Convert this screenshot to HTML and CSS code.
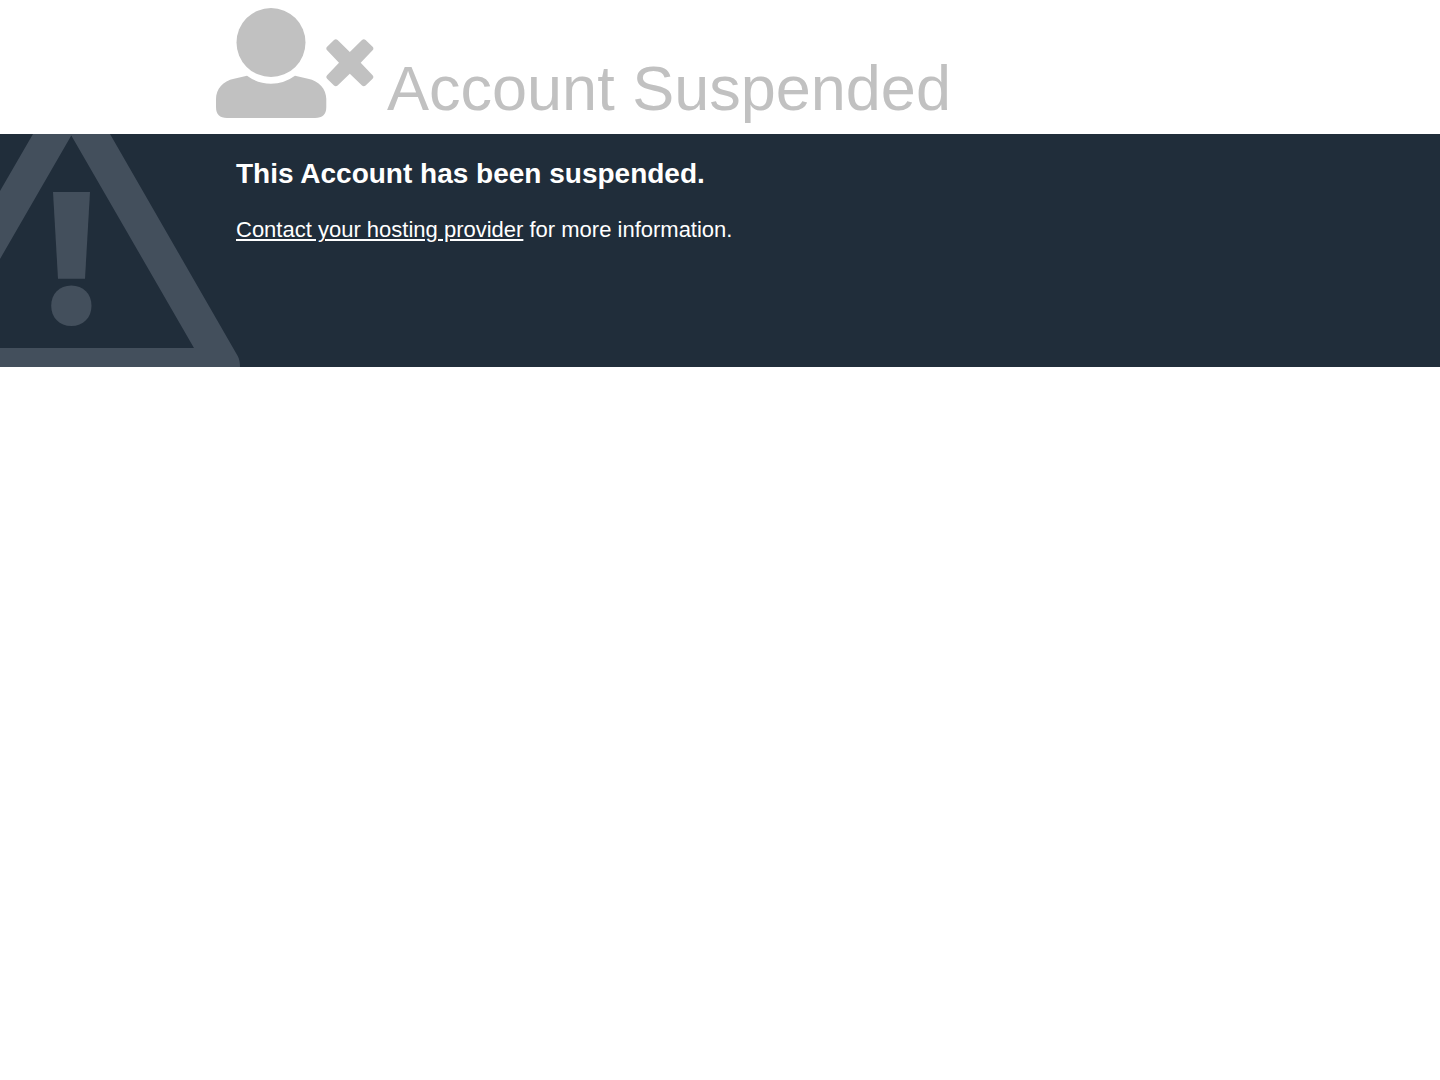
FILE: index.html
```html
<!DOCTYPE html>
<html lang="en">
<head>
    <meta charset="UTF-8">
    <meta name="viewport" content="width=device-width, initial-scale=1.0">
    <title>Account Suspended</title>
    <link rel="stylesheet" href="styles.css">
</head>
<body>
    <header class="container status">
        <svg class="status-icon" viewBox="0 0 158 110" aria-hidden="true">
            <circle cx="55" cy="34.5" r="34.5"/>
            <path d="M31 67.7 Q42 75.7 55 75.7 T79 67.7 L92 70.7 C103 73 110.3 81 110.3 91 V99 Q110.3 110 99 110 H11 Q0 110 0 99 V91 C0 81 7 73 18 70.7 Z"/>
            <path d="M118 32 Q119.8 30.6 121.6 32 L133.8 44 L146 32 Q147.8 30.6 149.6 32 L156.6 38.8 Q158.2 40.5 156.6 42.3 L144.7 54.8 L156.6 67.3 Q158.2 69.1 156.6 70.8 L149.6 77.6 Q147.8 79 146 77.6 L133.8 65.7 L121.6 77.6 Q119.8 79 118 77.6 L111.1 70.8 Q109.5 69.1 111.1 67.3 L123 54.8 L111.1 42.3 Q109.5 40.5 111.1 38.8 Z"/>
        </svg>
        <h1 class="status-reason">Account Suspended</h1>
    </header>

    <main class="content">
        <svg class="warning" viewBox="0 0 240 233" aria-hidden="true">
            <path d="M33 0 H110 L237.7 222 Q240 226 240 233 H0 V214 H194 L71.3 1.5 L0 125 V57 Z"/>
            <path d="M53 58 H90 L85 144.7 H58 Z"/>
            <path d="M71.3 151.5 C83.2 151.5 91.5 159.8 91.5 171.7 S83.2 192 71.3 192 S51.2 183.6 51.2 171.7 S59.4 151.5 71.3 151.5 Z"/>
        </svg>
        <div class="container info">
            <h2 class="info-heading">This Account has been suspended.</h2>
            <p class="info-text"><a href="#">Contact your hosting provider</a> for more information.</p>
        </div>
    </main>
</body>
</html>
```
FILE: styles.css
```css
* {
    margin: 0;
    padding: 0;
    box-sizing: border-box;
}

body {
    font-family: Arial, "Liberation Sans", sans-serif;
    font-size: 22px;
    line-height: 32px;
    background: #ffffff;
    color: #ffffff;
}

.container {
    width: 70%;
    margin: 0 auto;
}

.status {
    display: flex;
    align-items: flex-end;
    gap: 13px;
    padding: 8px 0 10px;
    color: #c1c1c1;
}

.status-icon {
    width: 158px;
    flex-shrink: 0;
    margin-bottom: 6px;
    fill: currentColor;
}

.status-reason {
    font-size: 63px;
    line-height: 72px;
    font-weight: normal;
}

.content {
    position: relative;
    overflow: hidden;
    min-height: 233px;
    background: #202d3a;
}

/* big faded sign behind the text */
.warning {
    position: absolute;
    top: 0;
    left: 0;
    width: 240px;
    fill: #434f5c;
}

.info {
    position: relative;
    padding: 24px 20px;
}

.info-heading {
    font-size: 28px;
    line-height: 32px;
    margin-bottom: 24px;
}

.info-text a {
    color: inherit;
}
```
